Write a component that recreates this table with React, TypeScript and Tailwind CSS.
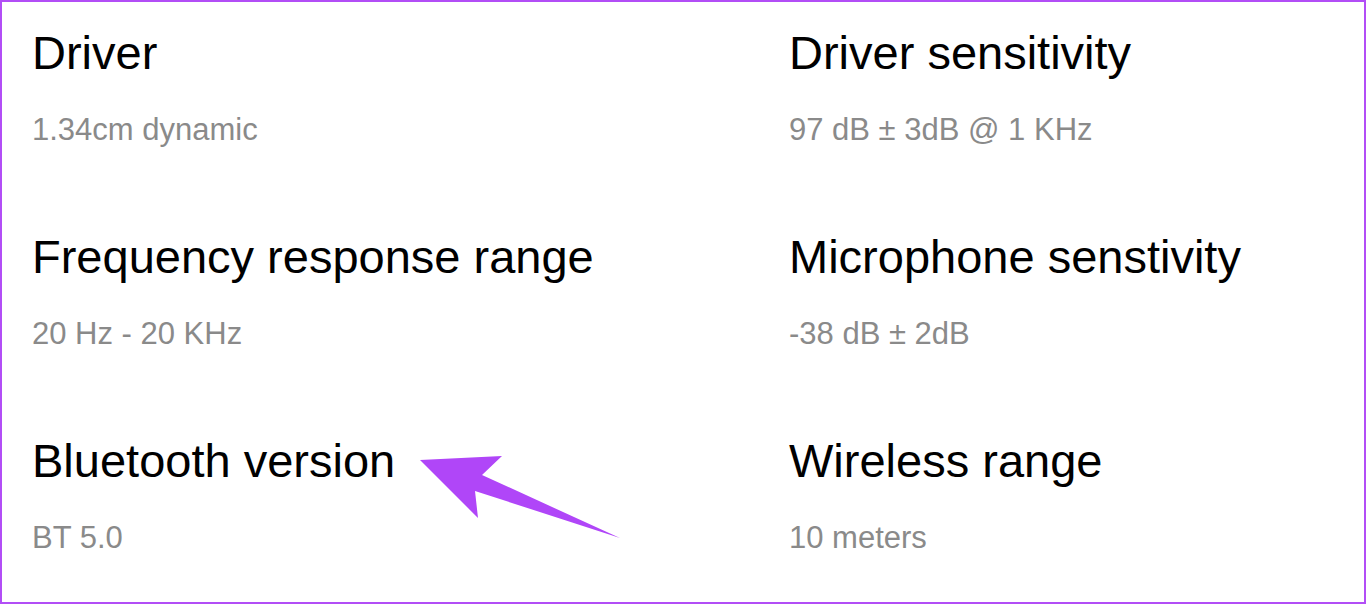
const specs = [
  { label: "Driver", value: "1.34cm dynamic" },
  { label: "Driver sensitivity", value: "97 dB ± 3dB @ 1 KHz" },
  { label: "Frequency response range", value: "20 Hz - 20 KHz" },
  { label: "Microphone senstivity", value: "-38 dB ± 2dB" },
  { label: "Bluetooth version", value: "BT 5.0" },
  { label: "Wireless range", value: "10 meters" },
];

export default function App() {
  return (
    <div className="relative h-[604px] w-[1366px] border-2 border-[#b24ef6] bg-white font-['Liberation_Sans',Arial,sans-serif]">
      <div className="grid grid-cols-[757px_1fr] gap-y-[88px] pl-[30px] pt-[27px]">
        {specs.map((s) => (
          <div key={s.label} className="flex flex-col gap-[38px]">
            <h3 className="text-[47px] leading-[47px] text-black">{s.label}</h3>
            <p className="text-[31px] leading-[31px] text-[#8a8a8a]">{s.value}</p>
          </div>
        ))}
      </div>

      {/* annotation arrow */}
      <svg
        className="absolute left-0 top-0 pointer-events-none"
        width="1366"
        height="604"
        viewBox="0 0 1366 604"
      >
        <polygon
          points="418,458 500,454 480,473 618,536 473,489 476,516"
          fill="#b046f8"
        />
      </svg>
    </div>
  );
}
